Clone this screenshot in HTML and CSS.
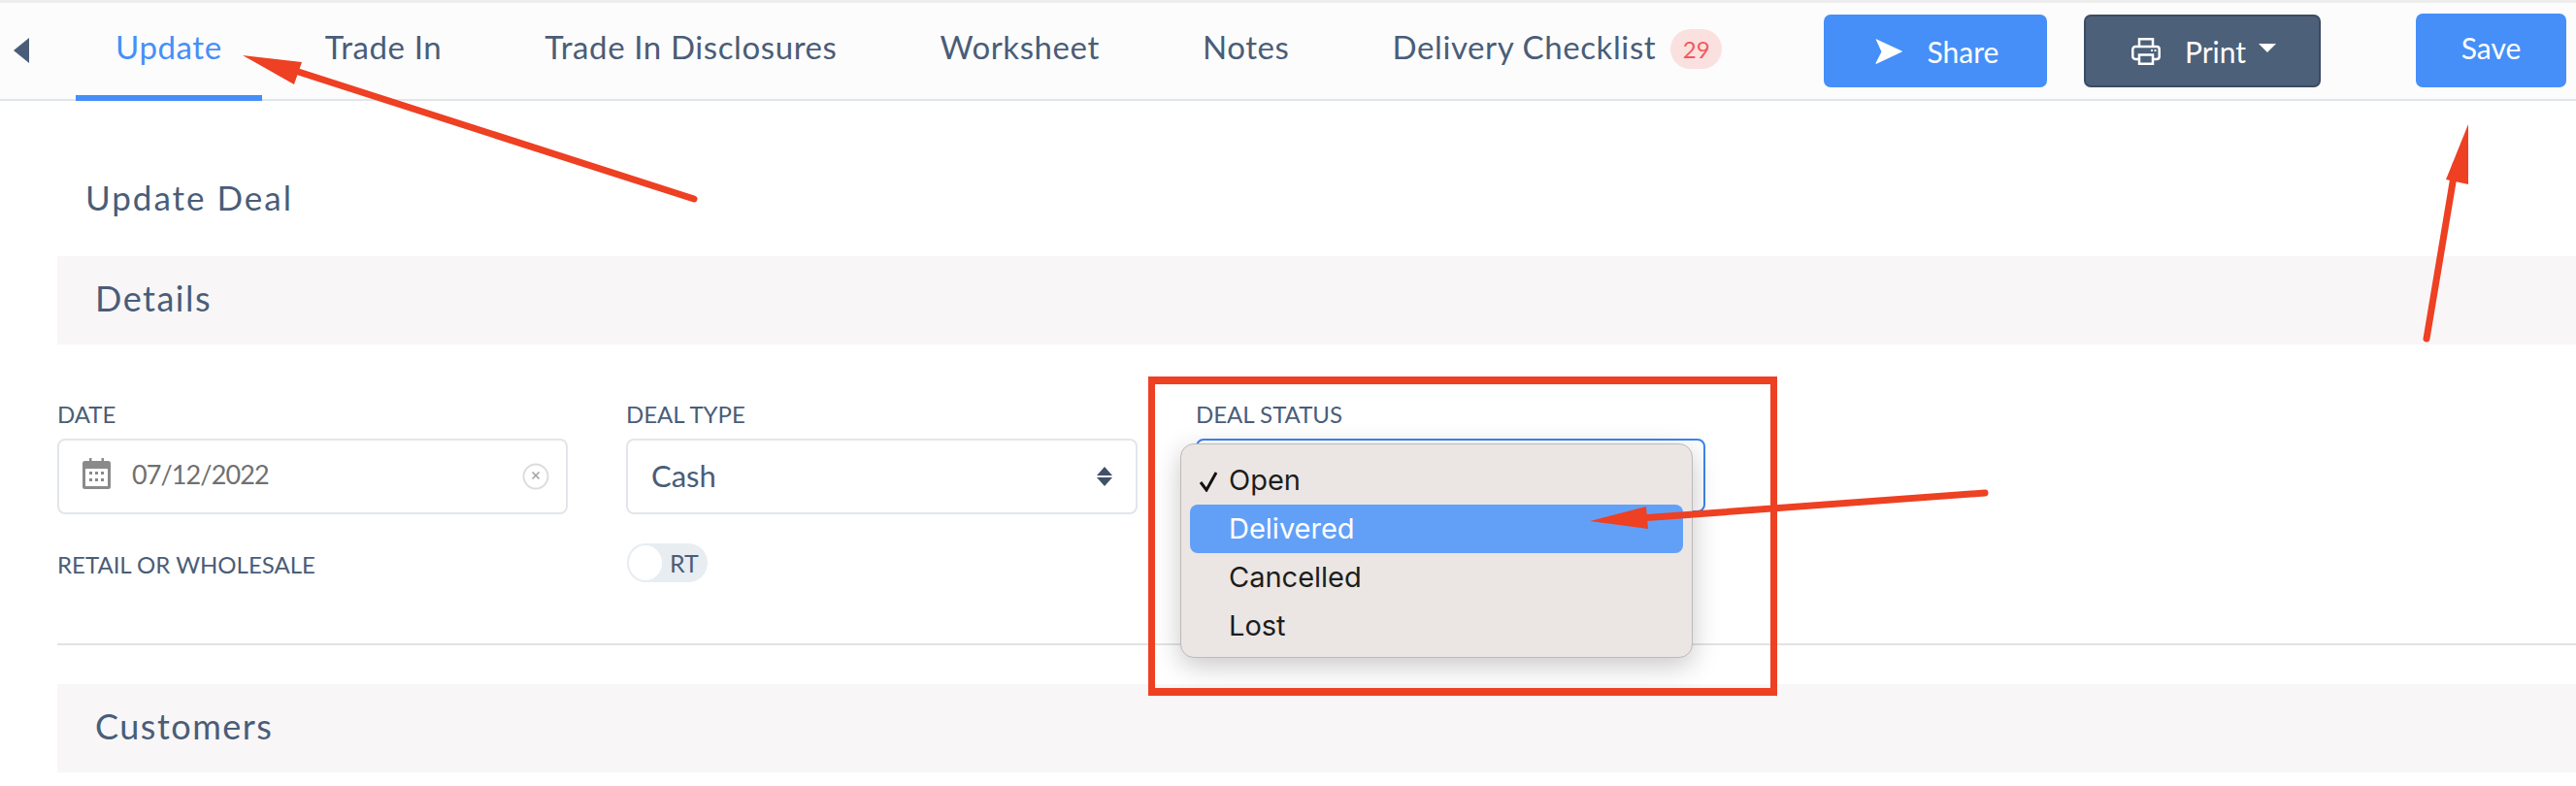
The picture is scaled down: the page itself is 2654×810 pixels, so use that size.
FILE: index.html
```html
<!DOCTYPE html>
<html lang="en">
<head>
<meta charset="utf-8">
<title>Update Deal</title>
<link rel="stylesheet" href="styles.css">
</head>
<body>
<header class="topbar">
  <svg class="back" viewBox="0 0 16 26"><path d="M16 0V26L0 13Z"/></svg>
  <nav class="tabs">
    <a class="tab tab-active">Update</a>
    <a class="tab">Trade In</a>
    <a class="tab">Trade In Disclosures</a>
    <a class="tab">Worksheet</a>
    <a class="tab">Notes</a>
    <a class="tab">Delivery Checklist<span class="badge">29</span></a>
  </nav>
  <div class="actions">
    <button class="btn btn-blue btn-share">
      <svg class="ico-share" viewBox="0 0 28 26"><path d="M1.5 0.5C1 0 0.4 .4 .8 1L6 12.2C6.4 13 6.4 13.4 6 14.2L.5 25C.2 25.7 .8 26 1.4 25.7L27.4 13.6C28 13.3 28 12.7 27.4 12.4Z"/></svg>Share
    </button>
    <button class="btn btn-dark">
      <svg class="ico-print" viewBox="0 0 30 30"><path d="M8 10V2.2h14V10M8 23H4a2.7 2.7 0 0 1-2.7-2.7V12.7A2.7 2.7 0 0 1 4 10h22a2.7 2.7 0 0 1 2.7 2.7v7.6A2.7 2.7 0 0 1 26 23h-4M8 18.500h14v9.300H8z" fill="none" stroke="#fff" stroke-width="2.500"/><path d="M20 13h2v2h-2zM23.500 13h2v2h-2z" fill="#fff"/></svg>Print<span class="caret"></span>
    </button>
    <button class="btn btn-blue btn-save"><span class="save-text">Save</span></button>
  </div>
</header>
<main class="page">
  <h1 class="title">Update Deal</h1>
  <section class="band">Details</section>
  <div class="form">
    <div class="field">
      <label class="label">DATE</label>
      <div class="input input-date">
        <svg class="ico-cal" viewBox="0 0 29 32"><path d="M7 0h2.500v4H7zM19.500 0H22v4h-2.500z" fill="#8a8a8a"/><path fill-rule="evenodd" d="M2.500 3h24A2.500 2.500 0 0 1 29 5.500v24a2.500 2.500 0 0 1-2.500 2.500h-24A2.500 2.500 0 0 1 0 29.500v-24A2.500 2.500 0 0 1 2.500 3ZM3 11v18h23V11ZM7 14h3v3H7zM13 14h3v3h-3zM19 14h3v3h-3zM7 21h3v3H7zM13 21h3v3h-3zM19 21h3v3h-3z" fill="#8a8a8a"/></svg>
        <span class="date-text">07/12/2022</span>
        <svg class="ico-clear" viewBox="0 0 28 28"><circle cx="14" cy="14" r="12.500" fill="none" stroke="#dcdcdc" stroke-width="2"/><path d="M10.500 9.500 17.500 16.500M17.500 9.500 10.500 16.500" stroke="#a0a0a0" stroke-width="1.500"/></svg>
      </div>
    </div>
    <div class="field">
      <label class="label">DEAL TYPE</label>
      <div class="input input-select">
        <span class="select-text">Cash</span>
        <svg class="ico-updown" viewBox="0 0 16 20"><path d="M8 0 16 9H0ZM8 20 0 11H16Z"/></svg>
      </div>
    </div>
    <div class="field">
      <label class="label">DEAL STATUS</label>
      <div class="input input-focus"></div>
    </div>
    <div class="row-label label">RETAIL OR WHOLESALE</div>
    <div class="toggle"><span class="knob"></span><span class="toggle-text">RT</span></div>
  </div>
  <hr class="divider">
  <section class="band">Customers</section>
</main>
<ul class="menu">
  <li class="menu-item"><svg class="ico-check" viewBox="0 0 20 22"><path d="M2 12 8 20 18 2" fill="none" stroke="#111" stroke-width="3"/></svg>Open</li>
  <li class="menu-item menu-item-on">Delivered</li>
  <li class="menu-item">Cancelled</li>
  <li class="menu-item">Lost</li>
</ul>
<div class="redbox"></div>
<svg class="arrows" viewBox="0 0 2654 810">
  <path d="M715 205 295 70" class="shaft"/>
  <path d="M250 57 311 64 303 87Z" class="head"/>
  <path d="M2500 349 2530 170" class="shaft"/>
  <path d="M2543 128 2520 185 2543 190Z" class="head"/>
  <path d="M2045 508 1690 534" class="shaft"/>
  <path d="M1638 537 1696 522 1698 545Z" class="head"/>
</svg>
</body>
</html>
```
FILE: styles.css
```css
* { box-sizing: border-box; }
html, body { margin: 0; height: 810px; overflow: hidden; background: #fff; }
body { position: relative; font-family: Lato, "Open Sans", sans-serif; color: #4a5d78; }

.topbar { height: 104px; border-top: 3px solid #eeeeee; border-bottom: 2px solid #e1e5e9; background: #fcfcfc; display: flex; position: relative; }
.back { width: 16px; height: 26px; margin: 36px 0 0 14px; fill: #4a5d78; flex: none; }
.tabs { display: flex; gap: 24px; margin-left: 48px; height: 101px; }
.tab { font-size: 33px; letter-spacing: .6px; line-height: 40px; padding: 25px 41px 0; height: 101px; white-space: nowrap; display: block; }
.tab-active { color: #468ff8; border-bottom: 6px solid #468ff8; }
.badge { display: inline-block; width: 53px; height: 41px; line-height: 41px; margin-left: 15px; border-radius: 21px; background: #fbe0e0; color: #f05a5a; font-size: 24px; letter-spacing: 0; text-align: center; vertical-align: 1px; }
.actions { position: absolute; left: 1879px; top: 11px; display: flex; align-items: flex-start; }
.btn { font-family: inherit; color: #fff; border: 0; border-radius: 7px; height: 75px; font-size: 30px; display: flex; align-items: center; justify-content: center; padding: 0; }
.btn-blue { background: #468ff8; }
.btn-share { width: 230px; margin-top: 1px; padding-left: 3px; }
.btn-dark { width: 244px; margin: 1px 0 0 38px; padding-left: 3px; background: #4d6079; border: 2px solid #3c4b61; }
.btn-save { width: 155px; height: 76px; margin-left: 98px; }
.save-text { margin-top: -6px; }
.ico-share { width: 28px; height: 26px; fill: #fff; margin-right: 26px; }
.ico-print { width: 30px; height: 30px; margin-right: 25px; }
.caret { width: 0; height: 0; margin: -6px 0 0 13px; border-left: 9px solid transparent; border-right: 9px solid transparent; border-top: 9px solid #fff; }

.page { padding: 0 0 0 59px; }
.title { margin: 0; padding: 78px 0 0 29px; height: 160px; font-size: 35px; font-weight: 400; letter-spacing: 2px; line-height: 42px; }
.band { height: 91px; background: #f8f6f7; padding-left: 39px; font-size: 36px; line-height: 86px; letter-spacing: 1.5px; }

.form { display: grid; grid-template-columns: 526px 527px 525px; column-gap: 60px; padding-top: 60px; height: 308px; grid-template-rows: 115px auto; align-content: start; }
.field { display: flex; flex-direction: column; }
.label { font-size: 24px; line-height: 24px; }
.field .label { margin-bottom: 13px; }
.input { height: 78px; flex: none; border: 2px solid #e2e6ea; border-radius: 8px; display: flex; align-items: center; }
.input-date { padding: 0 17px 0 24px; color: #707070; font-size: 27px; letter-spacing: -.9px; }
.ico-cal { width: 29px; height: 32px; margin: -6px 22px 0 0; flex: none; }
.date-text { flex: 1; margin-top: -6px; }
.ico-clear { width: 28px; height: 28px; }
.input-select { padding: 0 24px 0 24px; justify-content: space-between; font-size: 31px; }
.select-text { margin-top: -3px; }
.ico-updown { width: 16px; height: 20px; fill: #3f5068; }
.input-focus { border-color: #3c86ee; height: 76px; }
.row-label { padding-top: 40px; }
.toggle { width: 83px; height: 40px; margin: 30px 0 0 1px; background: #e8edf2; border-radius: 20px; display: flex; align-items: center; }
.knob { width: 38px; height: 40px; background: #fff; border: 2px solid #e8edf2; border-radius: 50%; }
.toggle-text { margin-left: 6px; font-size: 25px; }
.divider { margin: 0; border: 0; height: 2px; background: #e2e2e2; }
.form + .divider { margin-bottom: 40px; }

.menu { position: absolute; left: 1216px; top: 457px; width: 528px; height: 221px; margin: 0; padding: 12px 9px; list-style: none; background: #ebe6e3; border: 1px solid #bdbab8; border-radius: 14px; box-shadow: 0 8px 28px rgba(0,0,0,.22); font-family: Inter, sans-serif; font-size: 29px; color: #1d1d1d; }
.menu-item { height: 50px; line-height: 49px; padding-left: 40px; position: relative; }
.menu-item-on { background: #62a0f8; color: #fff; border-radius: 8px; }
.ico-check { position: absolute; left: 9px; top: 15px; width: 20px; height: 22px; }
.redbox { position: absolute; left: 1183px; top: 388px; width: 648px; height: 329px; border: solid #ee4023; border-width: 8px 7px; }
.arrows { position: absolute; left: 0; top: 0; width: 2654px; height: 810px; pointer-events: none; }
.shaft { stroke: #ee4023; stroke-width: 7; stroke-linecap: round; fill: none; }
.head { fill: #ee4023; }
```
